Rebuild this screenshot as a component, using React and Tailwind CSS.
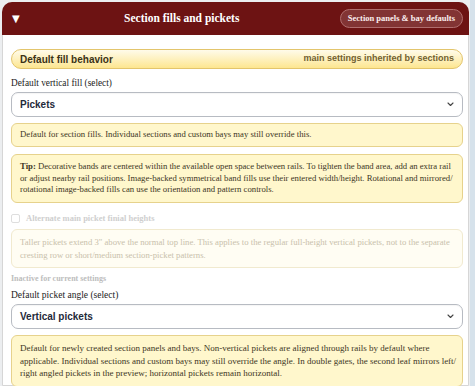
import React from 'react';

const Chevron = () => (
  <svg width="7" height="5" viewBox="0 0 7 5" fill="none">
    <path d="M1 1l2.5 2.5L6 1" stroke="#444" strokeWidth="1.1" strokeLinecap="round" strokeLinejoin="round" />
  </svg>
);

const Select = ({ value }) => (
  <div className="flex h-[25px] items-center justify-between rounded-[7px] border border-[#b7bbc2] bg-white pl-[8px] pr-[8px] shadow-[inset_0_1px_1px_rgba(0,0,0,0.04)]">
    <span className="font-['Liberation_Sans',Arial,sans-serif] text-[10px] font-bold text-[#1f2a3a]">{value}</span>
    <Chevron />
  </div>
);

const Note = ({ children, className = '' }) => (
  <div className={`rounded-[6px] border border-[#e6d28c] bg-[#fff7cc] pl-[8px] pr-[5px] font-['Liberation_Serif',serif] text-[#3d3624] ${className}`}>
    {children}
  </div>
);

const App = () => {
  return (
    <div className="flex h-screen overflow-hidden bg-[#eceef0] font-['Liberation_Serif',serif]">
      <div className="flex-1 pl-[2px] pr-[1px] pt-[2px]">
        <div className="h-full rounded-t-[10px] border border-[#d6d6d6] bg-white">
          {/* Header */}
          <div className="-m-px flex h-[33px] items-center rounded-t-[10px] bg-[#6d1313] pl-[10px] pr-[6px]">
            <span className="font-['DejaVu_Sans',sans-serif] text-[10px] leading-none text-white">▼</span>
            <div className="flex-1 pl-[4px] text-center font-['Liberation_Serif',serif] text-[11.5px] font-bold text-white">Section fills and pickets</div>
            <span className="rounded-full border border-[#b06e6e] bg-[#823434] px-[7px] py-[3px] font-['Liberation_Serif',serif] text-[8.5px] font-bold leading-[11px] text-[#fbeeee]">
              Section panels &amp; bay defaults
            </span>
          </div>

          {/* Body */}
          <div className="flex flex-col pl-[8px] pr-[5px] pt-[15px]">
            <div className="flex h-[20px] items-center justify-between rounded-full border border-[#e3c56c] bg-linear-to-b from-[#fffbea] to-[#fde68f] px-[8px] font-['Liberation_Sans',Arial,sans-serif]">
              <span className="text-[10px] font-bold text-[#3b3217]">Default fill behavior</span>
              <span className="text-[9px] font-bold text-[#716030]">main settings inherited by sections</span>
            </div>

            <label className="mt-[8px] font-['Liberation_Serif',serif] text-[9.3px] leading-[12px] text-[#222]">Default vertical fill (select)</label>
            <div className="mt-[3px]">
              <Select value="Pickets" />
            </div>

            <Note className="mt-[6px] flex h-[24px] items-center text-[8.7px]">
              Default for section fills. Individual sections and custom bays may still override this.
            </Note>

            <Note className="mt-[7px] py-[6px] text-[8.7px] leading-[11.7px]">
              <b>Tip:</b> Decorative bands are centered within the available open space between rails. To tighten the band area, add an extra rail or adjust nearby rail positions. Image-backed symmetrical band fills use their entered width/height. Rotational and mirrored/ rotational image-backed fills can use the orientation and pattern controls.
            </Note>

            <div className="mt-[10px] flex items-center gap-[6px]">
              <span className="h-[9px] w-[9px] rounded-[2px] border border-[#dedede] bg-white" />
              <span className="font-['Liberation_Serif',serif] text-[8.5px] font-bold leading-[11px] text-[#cfcfcf]">Alternate main picket finial heights</span>
            </div>

            <div className="mt-[5px] rounded-[6px] border border-[#f1eacf] bg-[#fffdf3] pl-[8px] pr-[5px] py-[6px] font-['Liberation_Serif',serif] text-[8.7px] leading-[12.5px] text-[#c9c1ab]">
              Taller pickets extend 3" above the normal top line. This applies to the regular full-height vertical pickets, not to the separate cresting row or short/medium section-picket patterns.
            </div>

            <div className="mt-[5px] font-['Liberation_Serif',serif] text-[8px] font-bold leading-[11px] text-[#bdbdbd]">Inactive for current settings</div>

            <label className="mt-[5px] font-['Liberation_Serif',serif] text-[9.5px] leading-[12px] text-[#222]">Default picket angle (select)</label>
            <div className="mt-[3px]">
              <Select value="Vertical pickets" />
            </div>

            <Note className="mt-[6px] py-[6px] text-[9px] leading-[12.5px]">
              Default for newly created section panels and bays. Non-vertical pickets are aligned through rails by default where applicable. Individual sections and custom bays may still override the angle. In double gates, the second leaf mirrors left/ right angled pickets in the preview; horizontal pickets remain horizontal.
            </Note>
          </div>
        </div>
      </div>
      <div className="w-[5px] bg-[#d6e2eb]" />
    </div>
  );
};

export default App;
